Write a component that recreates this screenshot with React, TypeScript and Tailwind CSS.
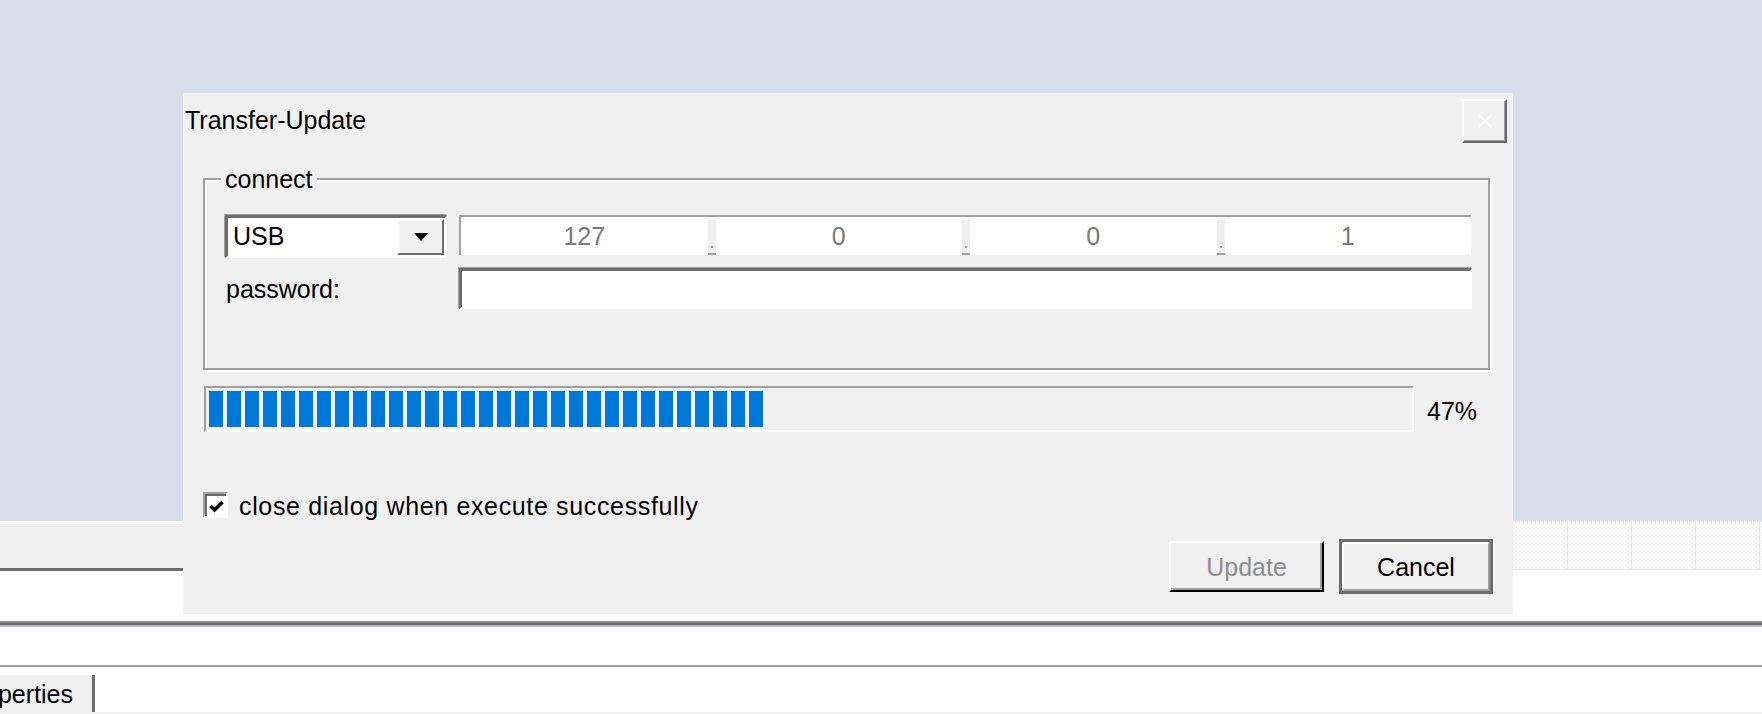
import React from 'react';

const font = { fontFamily: '"Liberation Sans", Arial, sans-serif' };

const Blocks = () => (
  <div className="flex gap-[4px]">
    {Array.from({ length: 31 }).map((_, i) => (
      <div key={i} className="w-[14px] h-[36px] bg-[#0078d7]" />
    ))}
  </div>
);

const IpDot = () => (
  <div className="w-[8px] self-stretch mt-[2px] bg-[#efefef] flex flex-col justify-end items-center">
    <div className="w-[2px] h-[2px] bg-[#8a9cb4] mb-[5px]" />
    <div className="w-full h-[2px] bg-[#a0a0a0]" />
  </div>
);

const IpPart = ({ value }: { value: string }) => (
  <div className="flex-1 flex items-center justify-center text-[#7a7a7a]">{value}</div>
);

export default function App() {
  return (
    <div
      className="relative w-[1762px] h-[714px] overflow-hidden bg-white text-[25px] leading-[28px] text-black"
      style={font}
    >
      {/* backdrop */}
      <div className="h-[521px] bg-[#d9dfea]" />
      <div className="flex h-[50px]">
        <div className="w-[1513px] flex flex-col">
          <div className="h-[3px] bg-white" />
          <div className="flex-1 bg-[#f0f0f0]" />
          <div className="h-[3px] bg-[#6d6d6d]" />
        </div>
        <div className="flex-1 flex flex-col">
          <div className="h-[49px] flex border-y border-dotted border-[#dcdcdc] bg-[repeating-conic-gradient(#f5f5f5_0%_25%,#fbfbfb_0%_50%)] bg-[length:4px_4px]">
            <div className="w-[55px] border-r border-dotted border-[#e0e0e0]" />
            <div className="w-[64px] border-r border-dotted border-[#e0e0e0]" />
            <div className="w-[64px] border-r border-dotted border-[#e0e0e0]" />
            <div className="w-[64px] border-r border-dotted border-[#e0e0e0]" />
          </div>
        </div>
      </div>
      <div className="h-[50px] bg-white" />
      <div className="h-[2px] bg-[#8c8c8c]" />
      <div className="h-[2px] bg-[#6d6d6d]" />
      <div className="h-[2px] bg-[#b6bacb]" />
      <div className="h-[38px] bg-white" />
      <div className="h-[2px] bg-[#a0a0a0]" />
      <div className="h-[6px] bg-white" />
      <div className="flex h-[39px]">
        <div className="w-[95px] bg-[#f0f0f0] border-r-[3px] border-[#6d6d6d] mt-[2px] flex justify-end overflow-hidden whitespace-nowrap pr-[19px] pt-[5px]">
          Properties
        </div>
      </div>
      <div className="h-[2px] bg-[#f0f0f0]" />

      {/* dialog */}
      <div className="absolute left-[183px] top-[93px] w-[1330px] h-[521px] bg-[#f0f0f0] flex flex-col">
        <div className="flex justify-between items-start pt-[6px] pr-[6px]">
          <div className="pl-[2px] mt-[7px]">Transfer-Update</div>
          <div className="w-[45px] h-[44px] border-t-2 border-l-2 border-white border-b-2 border-r-2 border-b-[#696969] border-r-[#696969] shadow-[inset_-1px_-1px_0_#a0a0a0] flex items-center justify-center">
            <svg width="16" height="16" viewBox="0 0 16 16">
              <path d="M2 2 L14 14 M14 2 L2 14" stroke="#fbfbfb" strokeWidth="2" />
            </svg>
          </div>
        </div>

        {/* group box */}
        <div className="relative mt-[35px] ml-[20px] w-[1287px] h-[192px] border-2 border-[#a0a0a0] shadow-[inset_2px_2px_0_#fff,2px_2px_0_#fff] pt-[35px] pl-[20px]">
          <div className="absolute left-[16px] -top-[15px] px-[4px] bg-[#f0f0f0]">connect</div>
          <div className="flex items-start gap-[12px]">
            <div className="w-[222px] h-[43px] border-t-[3px] border-l-[3px] border-[#6d6d6d] border-b-2 border-r-2 border-b-white border-r-white shadow-[-1px_-1px_0_#a0a0a0] bg-white flex">
              <div className="flex-1 pl-[5px] pt-[4px]">USB</div>
              <div className="w-[47px] h-[36px] mt-[1px] mr-[1px] bg-[#f0f0f0] border-t-2 border-l-2 border-white border-b-2 border-r-2 border-b-[#6d6d6d] border-r-[#6d6d6d] flex items-center justify-center">
                <svg width="16" height="8" viewBox="0 0 16 8">
                  <polygon points="1,0 15,0 8,8" fill="#000" />
                </svg>
              </div>
            </div>
            <div className="w-[1012px] h-[40px] border-t-2 border-l-2 border-[#a0a0a0] bg-white flex">
              <IpPart value="127" />
              <IpDot />
              <IpPart value="0" />
              <IpDot />
              <IpPart value="0" />
              <IpDot />
              <IpPart value="1" />
            </div>
          </div>
          <div className="flex items-start mt-[10px]">
            <div className="w-[234px] pl-[1px] pt-[7px]">password:</div>
            <div className="w-[1013px] h-[41px] border-t-[3px] border-l-[3px] border-[#6d6d6d] border-b-2 border-r-2 border-b-white border-r-white shadow-[-1px_-1px_0_#a0a0a0] bg-white" />
          </div>
        </div>

        {/* progress */}
        <div className="flex items-start mt-[16px] ml-[21px]">
          <div className="w-[1210px] h-[46px] border-t-2 border-l-2 border-[#a0a0a0] border-b-2 border-r-2 border-b-white border-r-white pt-[3px] pl-[3px]">
            <Blocks />
          </div>
          <div className="ml-[13px] pt-[11px]">47%</div>
        </div>

        {/* checkbox */}
        <div className="flex items-start mt-[60px] ml-[20px]">
          <div className="w-[25px] h-[26px] border-t-2 border-l-2 border-[#a0a0a0] border-b-2 border-r-2 border-b-white border-r-white">
            <div className="w-full h-full border-t-2 border-l-2 border-[#696969] bg-white flex items-center justify-center">
              <svg width="15" height="13" viewBox="0 0 15 13">
                <path d="M1.5 6 L5.5 10 L13.5 2" stroke="#000" strokeWidth="3.5" fill="none" />
              </svg>
            </div>
          </div>
          <div className="ml-[11px] tracking-[0.65px]">close dialog when execute successfully</div>
        </div>

        {/* buttons */}
        <div className="flex justify-end items-center gap-[15px] pr-[20px] mt-[19px]">
          <div className="w-[155px] h-[51px] border-t-2 border-l-2 border-white border-b-2 border-r-2 border-b-black border-r-black shadow-[inset_-2px_-2px_0_#a0a0a0] flex items-center justify-center text-[#8d8d8d]">
            Update
          </div>
          <div className="w-[154px] h-[55px] border-[3px] border-[#6d6d6d]">
            <div className="w-full h-full border-t-2 border-l-2 border-white border-b-2 border-r-2 border-b-[#a0a0a0] border-r-[#a0a0a0] flex items-center justify-center">
              Cancel
            </div>
          </div>
        </div>
      </div>
    </div>
  );
}
